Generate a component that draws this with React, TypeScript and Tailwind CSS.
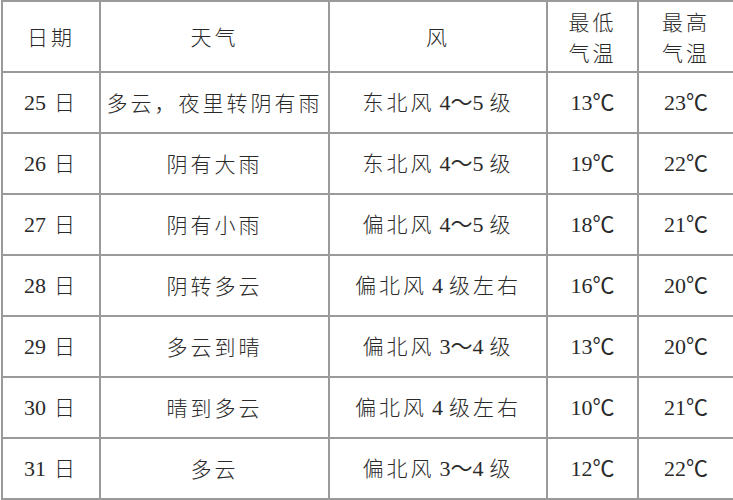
const rows = [
  { day: "25", weather: "多云，夜里转阴有雨", wind: ["东北风", "4～5", "级"], low: "13", high: "23" },
  { day: "26", weather: "阴有大雨", wind: ["东北风", "4～5", "级"], low: "19", high: "22" },
  { day: "27", weather: "阴有小雨", wind: ["偏北风", "4～5", "级"], low: "18", high: "21" },
  { day: "28", weather: "阴转多云", wind: ["偏北风", "4", "级左右"], low: "16", high: "20" },
  { day: "29", weather: "多云到晴", wind: ["偏北风", "3～4", "级"], low: "13", high: "20" },
  { day: "30", weather: "晴到多云", wind: ["偏北风", "4", "级左右"], low: "10", high: "21" },
  { day: "31", weather: "多云", wind: ["偏北风", "3～4", "级"], low: "12", high: "22" },
];

const cjk = "font-['Noto_Sans_CJK_SC',sans-serif] tracking-[3px] text-[21px]";
const num = "font-['Liberation_Serif','Noto_Sans_CJK_SC',serif] text-[22px]";
const cell = "border-2 border-[#9a9a9a] text-center align-middle p-0";

export default function App() {
  return (
    <div className="w-[733px] h-[500px] bg-white pl-[1px] text-[#2a2a2a]">
      <table className="table-fixed border-collapse w-[732px]">
        <colgroup>
          <col className="w-[98px]" />
          <col className="w-[229px]" />
          <col className="w-[218px]" />
          <col className="w-[91px]" />
          <col className="w-[96px]" />
        </colgroup>
        <thead>
          <tr className="h-[71px]">
            <th className={`${cell} font-light ${cjk}`}>日期</th>
            <th className={`${cell} font-light ${cjk}`}>天气</th>
            <th className={`${cell} font-light ${cjk}`}>风</th>
            <th className={`${cell} font-light ${cjk} leading-[31px]`}>
              最低
              <br />
              气温
            </th>
            <th className={`${cell} font-light ${cjk} leading-[31px]`}>
              最高
              <br />
              气温
            </th>
          </tr>
        </thead>
        <tbody>
          {rows.map((r) => (
            <tr key={r.day} className="h-[61px]">
              <td className={cell}>
                <span className={num}>{r.day}</span>
                <span className={`${cjk} ml-[8px] font-light`}>日</span>
              </td>
              <td className={`${cell} ${cjk} font-light`}>{r.weather}</td>
              <td className={cell}>
                <span className={`${cjk} font-light`}>{r.wind[0]}</span>
                <span className={`${num} ml-[5px] mr-[6px]`}>{r.wind[1]}</span>
                <span className={`${cjk} font-light`}>{r.wind[2]}</span>
              </td>
              <td className={`${cell} ${num}`}>{r.low}℃</td>
              <td className={`${cell} ${num}`}>{r.high}℃</td>
            </tr>
          ))}
        </tbody>
      </table>
    </div>
  );
}
